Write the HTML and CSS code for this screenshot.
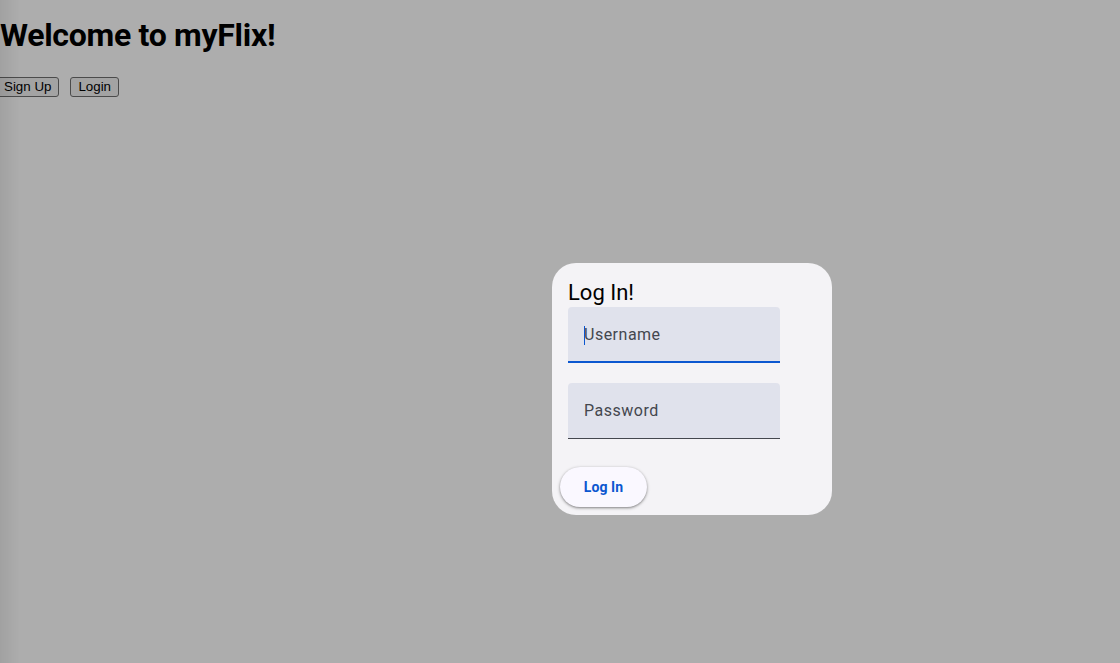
FILE: index.html
```html
<!DOCTYPE html>
<html lang="en">
<head>
<meta charset="utf-8">
<title>myFlix</title>
<link rel="stylesheet" href="styles.css">
</head>
<body>
<main class="page">
  <h1 class="title">Welcome to myFlix!</h1>
  <div class="nav">
    <button class="nav-btn" type="button">Sign Up</button>
    <button class="nav-btn" type="button">Login</button>
  </div>
</main>
<div class="backdrop"></div>
<div class="dialog" role="dialog">
  <h2 class="dialog-title">Log In!</h2>
  <form class="form">
    <label class="field field-focused">
      <span class="caret"></span>
      <span class="placeholder">Username</span>
    </label>
    <label class="field">
      <span class="placeholder">Password</span>
    </label>
  </form>
  <div class="actions">
    <button class="login-btn" type="button">Log In</button>
  </div>
</div>
</body>
</html>
```

FILE: styles.css
```css
html, body {
  margin: 0;
  padding: 0;
  background: #ffffff;
  height: 100%;
}
.page {
  padding-top: 12px;
}
.title {
  margin: 0;
  font-family: Roboto, "Liberation Sans", sans-serif;
  font-weight: 700;
  font-size: 32px;
  line-height: 46px;
  color: #000;
  letter-spacing: -0.3px;
}
.nav {
  display: flex;
  gap: 11px;
  margin: 19px 0 0 -4px;
}
.nav-btn {
  font-family: "Liberation Sans", Arial, sans-serif;
  font-size: 13.33px;
  height: 20px;
  padding: 0 7px;
  background: #f0f0f0;
  border: 1px solid #6f6f6f;
  border-radius: 3px;
  color: #000;
  line-height: 16px;
}
.backdrop {
  position: fixed;
  inset: 0;
  background: linear-gradient(to right, rgba(0,0,0,0.37), rgba(0,0,0,0.32) 20px);
}
.dialog {
  position: fixed;
  left: 552px;
  top: 263px;
  width: 280px;
  height: 252px;
  box-sizing: border-box;
  background: #f4f3f6;
  border-radius: 24px;
  padding: 16px 16px 0;
  display: flex;
  flex-direction: column;
  font-family: Roboto, "Liberation Sans", sans-serif;
}
.dialog-title {
  margin: 0;
  font-weight: 400;
  font-size: 22px;
  line-height: 28px;
  color: #000;
}
.form {
  display: flex;
  flex-direction: column;
  gap: 20px;
}
.field {
  position: relative;
  display: flex;
  align-items: center;
  width: 212px;
  height: 56px;
  box-sizing: border-box;
  padding: 0 16px;
  background: #e0e2ec;
  border-radius: 4px 4px 0 0;
  border-bottom: 1px solid #44474e;
}
.field-focused {
  border-bottom: 2px solid #0b57d0;
}
.placeholder {
  font-size: 16px;
  letter-spacing: 0.5px;
  color: #44474e;
}
.caret {
  position: absolute;
  left: 16px;
  top: 19px;
  width: 1px;
  height: 19px;
  background: #0b57d0;
}
.actions {
  display: flex;
  margin: 28px 0 0 -8px;
}
.login-btn {
  font-family: Roboto, "Liberation Sans", sans-serif;
  font-weight: 700;
  font-size: 14px;
  color: #0b57d0;
  background: #faf8ff;
  border: none;
  border-radius: 20px;
  width: 87px;
  height: 40px;
  padding: 0;
  letter-spacing: 0.1px;
  box-shadow: 0 1px 3px 1px rgba(0,0,0,0.15), 0 1px 2px rgba(0,0,0,0.3);
}
```
